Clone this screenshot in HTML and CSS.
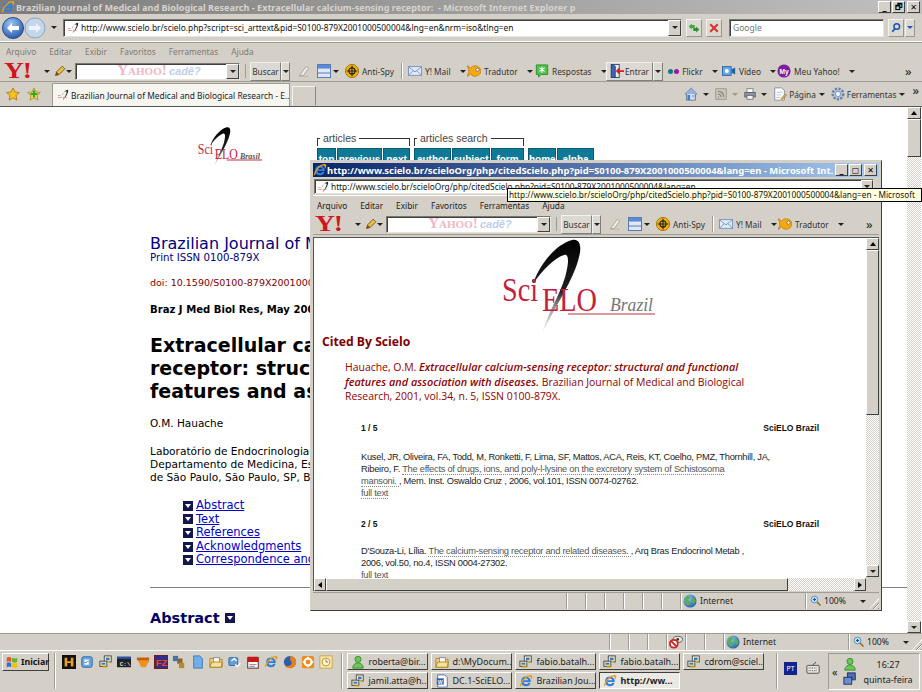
FILE: index.html
```html
<!DOCTYPE html>
<html lang="pt">
<head>
<meta charset="utf-8">
<title>Brazilian Journal of Medical and Biological Research</title>
<link rel="stylesheet" href="styles.css">
</head>
<body>
<svg class="sprite" width="0" height="0">
  <defs>
    <linearGradient id="sw" x1="0" y1="0" x2="0" y2="1"><stop offset="0" stop-color="#000"/><stop offset=".55" stop-color="#222"/><stop offset="1" stop-color="#ccc" stop-opacity=".2"/></linearGradient>
    <radialGradient id="gl" cx=".35" cy=".3" r=".8"><stop offset="0" stop-color="#8fc5ea"/><stop offset="1" stop-color="#1a5fa8"/></radialGradient>
    <radialGradient id="bk" cx=".4" cy=".3" r=".8"><stop offset="0" stop-color="#9cc6f0"/><stop offset="1" stop-color="#1c4fa8"/></radialGradient>
    <symbol id="fav" viewBox="0 0 16 16"><path d="M7 8C9 4 12 1 14 1c1.500 0 1 3-.5 6-1.500 3-4 6-6 8 1.500-3 4-6 5-9 .5-2 .5-3-.5-3-2 0-4 3-5.500 5z" fill="#222"/><path d="M1 8h4v1H1zM1 11h6v1H1zM8 11h5v1H8z" fill="#e08a8a"/></symbol>
    <symbol id="ie" viewBox="0 0 16 16"><path d="M8 3a5.500 5.500 0 1 0 5.200 7h-2.500a3 3 0 0 1-5.600-1H13.500A5.500 5.500 0 0 0 8 3zM5.200 7a3 3 0 0 1 5.600 0z" fill="#2f7fd6"/><path d="M1 13C3 6 10 0 14.500 1.500 16 2.500 15 5 13.500 7 14 4 13 2.600 11 3 7 4 3.500 9 2.500 13.500 2 14.500 1 14 1 13z" fill="#e8a020"/></symbol>
    <symbol id="globe" viewBox="0 0 16 16"><circle cx="8" cy="8" r="7.500" fill="url(#gl)"/><path d="M4 3c2-1 4 0 4 1S6 6 6 7s2 1 2 3-2 3-3 3-1-3-2-4-1-2-1-3 1-2 2-3zM10 5c2-1 4 1 4 3s-1 3-2 3-1-2-2-3 0-2 0-3z" fill="#5bb04b"/></symbol>
    <symbol id="zoomi" viewBox="0 0 16 16"><circle cx="6" cy="6" r="4.500" fill="#bfe0fa" stroke="#3d7fc0"/><path d="M4 6h4M6 4v4" stroke="#1d4fa0" stroke-width="1.500"/><path d="M9.500 9.500 14 14" stroke="#a07020" stroke-width="2.200"/></symbol>
    <symbol id="pencil" viewBox="0 0 16 16"><path d="M2 14l1.500-5L11 1.500l3.500 3.500L7 12.500z" fill="#e8c040" stroke="#5c3c10"/><path d="M2 14l1.500-5 3.500 3.500z" fill="#7a4a20"/></symbol>
    <symbol id="eraser" viewBox="0 0 16 16"><path d="M2 14L10 3c1-1 2-1 3 0s1 2 0 3L7 14z" fill="#eeeae0" stroke="#9a968c"/><path d="M1 15h13" stroke="#b0aca0"/></symbol>
    <symbol id="layout" viewBox="0 0 16 16"><rect x=".5" y="1.500" width="13" height="13" fill="#dfe8f6" stroke="#5a7ab8"/><path d="M.5 5h13M.5 10h13" stroke="#5a7ab8"/><rect x="1" y="2" width="12" height="3" fill="#5a8ad8"/></symbol>
    <symbol id="spy" viewBox="0 0 16 16"><circle cx="8" cy="8" r="7.500" fill="#f4b400" stroke="#a06a00"/><circle cx="8" cy="8" r="3.500" fill="none" stroke="#222" stroke-width="1.300"/><path d="M8 2v12M2 8h12" stroke="#222" stroke-width="1.300"/></symbol>
    <symbol id="mail" viewBox="0 0 16 16"><rect x=".5" y="3" width="15" height="10" fill="#dfeafa" stroke="#6f8fc8"/><path d="M1 3.500 8 9l7-5.500M1 12.500 6 7.500M15 12.500 10 7.500" fill="none" stroke="#6f8fc8"/></symbol>
    <symbol id="fish" viewBox="0 0 16 16"><path d="M0 2c2 0 3 2 4 3 1-2 3-3 5-3 4 0 7 3 7 6s-3 6-7 6c-2 0-4-1-5-3-1 1-2 3-4 3 1-2 2-4 2-6S1 4 0 2z" fill="#f5a80e" stroke="#a86404" stroke-width=".6"/><circle cx="12" cy="6.500" r="1.800" fill="#fff" stroke="#333" stroke-width=".6"/></symbol>
    <symbol id="resp" viewBox="0 0 16 16"><path d="M1.500 1h13v11H7l-3 3v-3H1.500z" fill="#4fc24b" stroke="#2a8a2a"/><path d="M8 3v7M5 4.500l6 4M11 4.500l-6 4" stroke="#fff" stroke-width="1.200"/></symbol>
    <symbol id="door" viewBox="0 0 16 16"><rect x="1.500" y=".5" width="9" height="15" fill="#eaf0fa" stroke="#24407a"/><path d="M1.500.5 6 2.500v13H1.500z" fill="#3c64b0" stroke="#24407a"/><path d="M16 8H9M11 5 8 8l3 3" fill="none" stroke="#d02020" stroke-width="2"/></symbol>
    <symbol id="video" viewBox="0 0 16 16"><rect x=".5" y="3" width="10" height="10" fill="#6aa8e8" stroke="#2060a8"/><circle cx="5.500" cy="8" r="2.200" fill="#fff"/><path d="M11 6l4-2v8l-4-2z" fill="#2060a8"/></symbol>
    <symbol id="my" viewBox="0 0 16 16"><circle cx="8" cy="8" r="7.500" fill="#7b1fa2"/><text x="8" y="11" text-anchor="middle" font-family="Liberation Sans" font-size="7.500" font-weight="700" fill="#fff">My</text></symbol>
    <symbol id="home" viewBox="0 0 16 16"><path d="M8 1 1 8h2v7h10V8h2z" fill="#dfe6f0" stroke="#586a8a"/><rect x="4" y="9" width="3" height="6" fill="#3f7fd0"/><rect x="9" y="9" width="3" height="3" fill="#8fb8e8"/><path d="M8 1 1 8h14z" fill="#9ab0d8"/></symbol>
    <symbol id="feed" viewBox="0 0 16 16"><rect x="1" y="1" width="14" height="14" fill="#c8c4ba" stroke="#908c84"/><path d="M4 12h1.500M4 8c2.500 0 4 1.500 4 4M4 4.500c4.500 0 7.500 3 7.500 7.500" fill="none" stroke="#8a867e" stroke-width="1.500"/></symbol>
    <symbol id="print" viewBox="0 0 16 16"><rect x="4" y="1" width="8" height="5" fill="#fff" stroke="#6a6a6a"/><rect x="1" y="6" width="14" height="6" fill="#8a96a8" stroke="#555"/><rect x="4" y="10" width="8" height="5" fill="#f2f2f2" stroke="#666"/></symbol>
    <symbol id="page" viewBox="0 0 16 16"><path d="M2 1h8l3 3v11H2z" fill="#fff" stroke="#7a8aa8"/><path d="M4 6h7M4 9h5M4 12h4" stroke="#b0bccc"/><path d="M9 13l5-5 1.500 1.500-5 5z" fill="#e8b040" stroke="#8a6010" stroke-width=".6"/></symbol>
    <symbol id="gear" viewBox="0 0 16 16"><circle cx="8" cy="8" r="6" fill="#b7cbe0" stroke="#6a84a8" stroke-width="3" stroke-dasharray="2.500 1.500"/><circle cx="8" cy="8" r="3" fill="#eef4fb" stroke="#7a90ae"/></symbol>
    <symbol id="star" viewBox="0 0 16 16"><path d="M8 1l2.200 4.700 5.100.6-3.800 3.500 1 5.200L8 12.400 3.500 15l1-5.200L.7 6.300l5.100-.6z" fill="#f7c21e" stroke="#b07a10"/></symbol>
    <symbol id="star2" viewBox="0 0 16 16"><path d="M8 1l2.200 4.700 5.100.6-3.800 3.500 1 5.200L8 12.400 3.500 15l1-5.200L.7 6.300l5.100-.6z" fill="#f7d860" stroke="#b09020"/><path d="M8 4v8M4 8h8" stroke="#2fa82f" stroke-width="2.500"/></symbol>
    <symbol id="block" viewBox="0 0 16 16"><ellipse cx="10" cy="5" rx="5.500" ry="3.500" fill="#e8e4d8" stroke="#555"/><circle cx="10" cy="5" r="1.500" fill="#333"/><circle cx="5.500" cy="10" r="4.500" fill="#fff" stroke="#d02020" stroke-width="2"/><path d="M2.500 7 8.500 13" stroke="#d02020" stroke-width="2"/></symbol>
    <symbol id="winflag" viewBox="0 0 16 16"><path d="M2 3c2-1 3-1 5 0v5C5 7 4 7 2 8z" fill="#e2542a"/><path d="M8 3c2 1 4 1 6 0v5c-2 1-4 1-6 0z" fill="#6cb52d"/><path d="M2 9c2-1 3-1 5 0v5c-2-1-3-1-5 0z" fill="#2f70d0"/><path d="M8 9c2 1 4 1 6 0v5c-2 1-4 1-6 0z" fill="#f2c010"/></symbol>
    <symbol id="hicon" viewBox="0 0 16 16"><rect width="16" height="16" fill="#111"/><path d="M3 3h3v4h4V3h3v10h-3V9H6v4H3z" fill="#e8a020"/></symbol>
    <symbol id="shield" viewBox="0 0 16 16"><rect x="2" y="2" width="12" height="12" rx="2" fill="#6aa4dc" stroke="#2a62a8"/><path d="M5 5h5v2H7v1h3v3H5V9h3V8H5z" fill="#fff"/></symbol>
    <symbol id="pcs" viewBox="0 0 16 16"><rect x="6" y="1" width="8" height="7" fill="#f0e8c0" stroke="#444"/><rect x="1" y="7" width="8" height="6" fill="#e0d8b0" stroke="#444"/><rect x="8" y="3" width="4" height="3" fill="#3878c8"/><rect x="3" y="9" width="4" height="2" fill="#3878c8"/><path d="M4 14h5M9 9l3-1" stroke="#e8c020" stroke-width="1.500"/></symbol>
    <symbol id="cmd" viewBox="0 0 16 16"><rect y="2" width="16" height="12" fill="#222"/><rect y="2" width="16" height="2.500" fill="#2a4fa8"/><text x="3" y="12" font-family="Liberation Mono" font-size="7" font-weight="700" fill="#ddd">C:\</text></symbol>
    <symbol id="box" viewBox="0 0 16 16"><path d="M1 3h14v4l-4 7H6L3 8z" fill="#f09020"/><path d="M1 3h14v3H1z" fill="#c06010"/></symbol>
    <symbol id="fz" viewBox="0 0 16 16"><rect width="16" height="16" fill="#7a1818"/><rect x="1" y="1" width="14" height="14" fill="#3a2a88"/><text x="2" y="12" font-family="Liberation Sans" font-size="11" font-weight="700" fill="#e84a20">FZ</text></symbol>
    <symbol id="cubes" viewBox="0 0 16 16"><rect x="1" y="1" width="6" height="6" fill="#4a70a8"/><rect x="6" y="4" width="6" height="6" fill="#886a30"/><rect x="8" y="9" width="6" height="6" fill="#b88a30"/></symbol>
    <symbol id="doc" viewBox="0 0 16 16"><path d="M3 1h7l3 3v11H3z" fill="#72aee6" stroke="#3a7ab8"/></symbol>
    <symbol id="folder" viewBox="0 0 16 16"><path d="M1 4h5l1 1h8v9H1z" fill="#f4d480" stroke="#a88428"/><rect x="5" y="3" width="7" height="7" fill="#f8f8f8" stroke="#888"/><path d="M1 14l2-6h12l-1 6z" fill="#f8e098" stroke="#a88428"/></symbol>
    <symbol id="net" viewBox="0 0 16 16"><rect x="1" y="3" width="10" height="9" rx="1" fill="#5fa0dc" stroke="#2a60a8"/><path d="M4 7l3-3 3 3M8 11l3 2 3-4" fill="none" stroke="#fff" stroke-width="1.500"/></symbol>
    <symbol id="note" viewBox="0 0 16 16"><rect x="2" y="3" width="12" height="12" fill="#fff" stroke="#501010"/><rect x="2" y="2" width="12" height="6" fill="#c81818"/><path d="M4 11h8M4 13h6" stroke="#777"/></symbol>
    <symbol id="fox" viewBox="0 0 16 16"><circle cx="8" cy="8" r="7" fill="#2a5fb0"/><path d="M8 1c4 0 7 3 7 7s-3 7-7 7c-3 0-5-1-6-3 2 1 5 1 7-1s1-4-1-5c0-2 1-3 0-5z" fill="#e8801a"/></symbol>
    <symbol id="ogear" viewBox="0 0 16 16"><rect x="1" y="1" width="14" height="14" rx="2" fill="#f08a18"/><circle cx="8" cy="8" r="4" fill="none" stroke="#fff" stroke-width="2.500"/><path d="M8 2v3M8 11v3M2 8h3M11 8h3" stroke="#fff" stroke-width="2"/></symbol>
    <symbol id="clock" viewBox="0 0 16 16"><rect x="1" y="1" width="14" height="14" fill="#fbe9a8" stroke="#c8a040"/><circle cx="8" cy="8" r="4.500" fill="#fff8dc" stroke="#b08838"/><path d="M8 5v3h2.500" fill="none" stroke="#906820"/></symbol>
    <symbol id="buddy" viewBox="0 0 16 16"><circle cx="8" cy="5" r="3.500" fill="#6cc65a" stroke="#3a8a30"/><path d="M2 15c0-4 3-6 6-6s6 2 6 6z" fill="#6cc65a" stroke="#3a8a30"/></symbol>
    <symbol id="wordi" viewBox="0 0 16 16"><path d="M3 1h8l3 3v11H3z" fill="#fff" stroke="#4a6ab0"/><rect x="2" y="5" width="8" height="7" fill="#2a5ab0"/><text x="3" y="11" font-family="Liberation Sans" font-size="6" font-weight="700" fill="#fff">W</text></symbol>
    <symbol id="kbd" viewBox="0 0 16 16"><rect x="1" y="5" width="14" height="9" rx="1" fill="#e8e6de" stroke="#444"/><path d="M3 8h10M3 11h10" stroke="#444" stroke-dasharray="1 1"/><path d="M8 5c0-3 3-1 3-4" fill="none" stroke="#444"/></symbol>
    <symbol id="mon" viewBox="0 0 16 16"><rect x="5" y="1" width="9" height="8" fill="#4a6eb0" stroke="#1c2f5c"/><rect x="1" y="6" width="9" height="8" fill="#6a8ecc" stroke="#1c2f5c"/></symbol>
    <symbol id="search" viewBox="0 0 16 16"><circle cx="9" cy="6" r="3.800" fill="none" stroke="#1d52b8" stroke-width="2"/><path d="M6.500 9 3 13" stroke="#1d52b8" stroke-width="2.500"/></symbol>
    <symbol id="go" viewBox="0 0 16 16"><path d="M1 6 5 2v2h4v4H5v2z" fill="#41a83f"/><path d="M15 10l-4 4v-2H7V8h4V6z" fill="#2f8f2f"/></symbol>
    <symbol id="stop" viewBox="0 0 16 16"><path d="M3 3l10 10M13 3 3 13" stroke="#d8302a" stroke-width="2.600"/></symbol>
    <symbol id="bkarrow" viewBox="0 0 22 22"><circle cx="11" cy="11" r="10.500" fill="url(#bk)" stroke="#26498c"/><path d="M5 11l5-5v3h7v4h-7v3z" fill="#fff"/></symbol>
    <symbol id="fwarrow" viewBox="0 0 22 22"><circle cx="11" cy="11" r="10" fill="#c4d6ea" stroke="#8ba4c4"/><path d="M17 11l-5-5v3H5v4h7v3z" fill="#eef4fb"/></symbol>
  </defs>
</svg>

<div class="desktop">
  <main class="window main-win">
    <div class="titlebar inactive">
      <svg class="ic14"><use href="#ie"/></svg>
      <span class="title-text">Brazilian Journal of Medical and Biological Research - Extracellular calcium-sensing receptor:  - Microsoft Internet Explorer p</span>
      <span class="winbtns"><span class="wb">_</span><span class="wb">🗗</span><span class="wb wb-x">✕</span></span>
    </div>
    <div class="addr-row">
      <svg class="nav-ic"><use href="#bkarrow"/></svg>
      <svg class="nav-ic"><use href="#fwarrow"/></svg>
      <i class="dn nav-dn"></i>
      <div class="field addr-field">
        <svg class="ic12"><use href="#fav"/></svg>
        <span class="url">http://www.scielo.br/scielo.php?script=sci_arttext&amp;pid=S0100-879X2001000500004&amp;lng=en&amp;nrm=iso&amp;tlng=en</span>
        <span class="combo-btn"><i class="dn"></i></span>
      </div>
      <span class="sq-btn"><svg class="ic12"><use href="#go"/></svg></span>
      <span class="sq-btn"><svg class="ic12"><use href="#stop"/></svg></span>
      <div class="field google-field"><span class="google">Google</span></div>
      <span class="sq-btn sbtn"><svg class="ic12"><use href="#search"/></svg></span>
      <span class="sq-btn sdrop"><i class="dn dn-blue"></i></span>
    </div>
    <nav class="menubar main-menu">
      <span>Arquivo</span><span>Editar</span><span>Exibir</span><span>Favoritos</span><span>Ferramentas</span><span>Ajuda</span>
    </nav>
    <div class="ytb ytb-main">
      <span class="ylogo">Y!</span><span class="cell"><i class="dn"></i></span>
      <span class="cell cell-l"><svg class="ic12"><use href="#pencil"/></svg><i class="dn"></i></span>
      <div class="field yfield"><span class="yahoo-wm"><b>Yahoo!</b> <em>cadê?</em></span><span class="combo-btn"><i class="dn"></i></span></div>
      <span class="cell"><i class="grip"></i></span>
      <span class="rbtn">Buscar</span><span class="rbtn rdrop"><i class="dn"></i></span>
      <span class="cell"><svg class="ic12"><use href="#eraser"/></svg></span>
      <span class="cell cell-l"><svg class="ic16"><use href="#layout"/></svg><i class="dn"></i></span>
      <span class="cell cell-l tool"><svg class="ic14"><use href="#spy"/></svg>Anti-Spy</span>
      <span class="cell cell-l"><i class="vsep"></i></span>
      <span class="cell cell-l tool"><svg class="ic14"><use href="#mail"/></svg>Y! Mail<i class="dn dn-tool"></i></span>
      <span class="cell cell-l tool"><svg class="ic14"><use href="#fish"/></svg>Tradutor<i class="dn dn-tool"></i></span>
      <span class="cell cell-l tool"><svg class="ic14"><use href="#resp"/></svg>Respostas<i class="dn dn-tool"></i></span>
      <span class="rbtn tool"><svg class="ic14"><use href="#door"/></svg>Entrar</span><span class="rbtn rdrop rdrop-w"><i class="dn"></i></span>
      <span class="cell cell-l tool"><i class="flickr blue"></i><i class="flickr pink"></i>&nbsp;Flickr<i class="dn dn-tool"></i></span>
      <span class="cell cell-l tool"><svg class="ic14"><use href="#video"/></svg>Vídeo<i class="dn dn-tool"></i></span>
      <span class="cell cell-l tool"><svg class="ic14"><use href="#my"/></svg>Meu Yahoo!<i class="dn dn-tool"></i></span>
      <span class="chev">»</span>
    </div>
    <div class="tabs-row">
      <svg class="ic14 star"><use href="#star"/></svg>
      <svg class="ic14 star"><use href="#star2"/></svg>
      <div class="tab"><svg class="ic12"><use href="#fav"/></svg><span>Brazilian Journal of Medical and Biological Research - E...</span></div>
      <div class="tab-new"></div>
      <div class="cmds">
        <svg class="ic14"><use href="#home"/></svg><i class="dn"></i>
        <svg class="ic12"><use href="#feed"/></svg><i class="dn dn-off"></i>
        <svg class="ic12"><use href="#print"/></svg><i class="dn"></i>
        <svg class="ic14"><use href="#page"/></svg><span>Página</span><i class="dn"></i>
        <svg class="ic14"><use href="#gear"/></svg><span>Ferramentas</span><i class="dn"></i>
        <span class="chev chev-s">»</span>
      </div>
    </div>
    <div class="viewport">
      <article class="article">
        <header class="art-head">
          <svg class="logo-s" viewBox="0 0 153 95" aria-label="SciELO Brasil">
            <path d="M32 42C37 28 52 6 70 1C78-1 80 8 77 18C72 40 54 66 40 95C46 72 62 50 65 30C67 20 66 15 62 16C52 19 40 32 33 42Z" fill="url(#sw)"/>
            <text x="2" y="64" textLength="36" lengthAdjust="spacingAndGlyphs" class="lg-sci">Sci</text>
            <text x="42" y="75" textLength="54" lengthAdjust="spacingAndGlyphs" class="lg-elo">ELO</text>
            <text x="101" y="75" textLength="47" lengthAdjust="spacingAndGlyphs" class="lg-bra">Brasil</text>
            <path d="M70 78h83" stroke="#c03040" stroke-width="2.500"/>
          </svg>
          <div class="art-nav">
            <div class="nav-group ng-art">
              <div class="legend"><span>articles</span></div>
              <div class="nbtns"><span class="nb nb-top">top</span><span class="nb nb-prev">previous</span><span class="nb nb-next">next</span></div>
            </div>
            <div class="nav-group ng-search">
              <div class="legend"><span>articles search</span></div>
              <div class="nbtns"><span class="nb nb-auth">author</span><span class="nb nb-subj">subject</span><span class="nb nb-form">form</span></div>
            </div>
            <div class="nav-group ng-home">
              <div class="legend-none"></div>
              <div class="nbtns"><span class="nb nb-home">home</span><span class="nb nb-alpha">alpha</span></div>
            </div>
          </div>
        </header>
        <p class="journal">Brazilian Journal of Medical and Biological Research</p>
        <p class="issn">Print ISSN 0100-879X</p>
        <p class="doi">doi: 10.1590/S0100-879X2001000500004</p>
        <p class="cite">Braz J Med Biol Res, May 2001, Volume 34(5) 573-580</p>
        <h1 class="art-title">Extracellular calcium-sensing<br>receptor: structural and functional<br>features and association with diseases</h1>
        <p class="author">O.M. Hauache</p>
        <p class="affil">Laboratório de Endocrinologia Molecular e Translacional,<br>Departamento de Medicina, Escola Paulista de Medicina, Universidade Federal<br>de São Paulo, São Paulo, SP, Brasil</p>
        <ul class="toc">
          <li><i class="sq-arrow"></i><a href="#">Abstract</a></li>
          <li><i class="sq-arrow"></i><a href="#">Text</a></li>
          <li><i class="sq-arrow"></i><a href="#">References</a></li>
          <li><i class="sq-arrow"></i><a href="#">Acknowledgments</a></li>
          <li><i class="sq-arrow"></i><a href="#">Correspondence and notes</a></li>
        </ul>
        <hr class="rule">
        <h2 class="abs">Abstract <i class="sq-arrow sq-up"></i></h2>
      </article>
      <div class="vscroll main-v">
        <span class="sb-btn"><i class="up"></i></span>
        <span class="sb-thumb"></span>
        <span class="sb-track"></span>
        <span class="sb-btn"><i class="dn"></i></span>
      </div>
    </div>
    <div class="status status-main">
      <span class="st-fill"></span>
      <span class="st-cell"></span><span class="st-cell"></span><span class="st-cell"></span>
      <span class="st-cell st-ic"><svg class="ic14"><use href="#block"/></svg></span>
      <span class="st-cell"></span><span class="st-cell"></span>
      <span class="st-zone"><svg class="ic14"><use href="#globe"/></svg>Internet</span>
      <span class="st-zoom"><svg class="ic12"><use href="#zoomi"/></svg>100%<i class="dn"></i></span>
      <span class="st-grip"></span>
    </div>
  </main>

  <footer class="taskbar">
    <button class="start"><svg class="ic14"><use href="#winflag"/></svg>Iniciar</button>
    <i class="tb-sep sep-a"></i>
    <div class="quick">
      <svg class="ic14"><use href="#hicon"/></svg><svg class="ic14"><use href="#shield"/></svg><svg class="ic14"><use href="#pcs"/></svg><svg class="ic14"><use href="#cmd"/></svg><svg class="ic14"><use href="#box"/></svg><svg class="ic14"><use href="#fz"/></svg><svg class="ic14"><use href="#cubes"/></svg><svg class="ic14"><use href="#doc"/></svg><svg class="ic14"><use href="#folder"/></svg><svg class="ic14"><use href="#net"/></svg><svg class="ic14"><use href="#note"/></svg><svg class="ic14"><use href="#ie"/></svg><svg class="ic14"><use href="#fox"/></svg><svg class="ic14"><use href="#ogear"/></svg><svg class="ic14"><use href="#clock"/></svg>
    </div>
    <i class="tb-sep sep-b"></i>
    <div class="tasks">
      <span class="task"><svg class="ic14"><use href="#buddy"/></svg>roberta@bir...</span>
      <span class="task"><svg class="ic14"><use href="#folder"/></svg>d:\MyDocum...</span>
      <span class="task"><svg class="ic14"><use href="#pcs"/></svg>fabio.batalh...</span>
      <span class="task"><svg class="ic14"><use href="#pcs"/></svg>fabio.batalh...</span>
      <span class="task"><svg class="ic14"><use href="#pcs"/></svg>cdrom@sciel...</span>
      <span class="task"><svg class="ic14"><use href="#pcs"/></svg>jamil.atta@h...</span>
      <span class="task"><svg class="ic14"><use href="#wordi"/></svg>DC.1-SciELO...</span>
      <span class="task"><svg class="ic14"><use href="#ie"/></svg>Brazilian Jou...</span>
      <span class="task active"><svg class="ic14"><use href="#ie"/></svg>http://ww...</span>
    </div>
    <i class="tb-sep sep-c"></i>
    <span class="lang">PT</span>
    <svg class="ic14 kbd"><use href="#kbd"/></svg>
    <div class="tray">
      <span class="tray-ch">«</span>
      <span class="tray-ics"><svg class="ic14"><use href="#buddy"/></svg><svg class="ic14"><use href="#mon"/></svg></span>
      <span class="clock"><span>16:27</span><span>quinta-feira</span></span>
    </div>
  </footer>

  <section class="window popup">
    <div class="titlebar active">
      <svg class="ic14"><use href="#ie"/></svg>
      <span class="title-text">http://www.scielo.br/scieloOrg/php/citedScielo.php?pid=S0100-879X2001000500004&amp;lang=en - Microsoft Int...</span>
      <span class="winbtns"><span class="wb">_</span><span class="wb">▢</span><span class="wb wb-x">✕</span></span>
    </div>
    <div class="pop-addr">
      <div class="field pop-field">
        <svg class="ic12"><use href="#fav"/></svg>
        <span class="url">http://www.scielo.br/scieloOrg/php/citedScielo.php?pid=S0100-879X2001000500004&amp;lang=en</span>
        <span class="combo-btn"><i class="dn"></i></span>
      </div>
    </div>
    <nav class="menubar pop-menu">
      <span>Arquivo</span><span>Editar</span><span>Exibir</span><span>Favoritos</span><span>Ferramentas</span><span>Ajuda</span>
    </nav>
    <div class="ytb ytb-pop">
      <span class="ylogo">Y!</span><span class="cell"><i class="dn"></i></span>
      <span class="cell cell-l"><svg class="ic12"><use href="#pencil"/></svg><i class="dn"></i></span>
      <div class="field yfield"><span class="yahoo-wm"><b>Yahoo!</b> <em>cadê?</em></span><span class="combo-btn"><i class="dn"></i></span></div>
      <span class="cell"><i class="grip"></i></span>
      <span class="rbtn">Buscar</span><span class="rbtn rdrop"><i class="dn"></i></span>
      <span class="cell"><svg class="ic12"><use href="#eraser"/></svg></span>
      <span class="cell cell-l"><svg class="ic16"><use href="#layout"/></svg><i class="dn"></i></span>
      <span class="cell cell-l tool"><svg class="ic14"><use href="#spy"/></svg>Anti-Spy</span>
      <span class="cell cell-l"><i class="vsep"></i></span>
      <span class="cell cell-l tool"><svg class="ic14"><use href="#mail"/></svg>Y! Mail<i class="dn dn-tool"></i></span>
      <span class="cell cell-l tool"><svg class="ic14"><use href="#fish"/></svg>Tradutor<i class="dn dn-tool"></i></span>
      <span class="chev">»</span>
    </div>
    <div class="pop-view">
      <div class="pop-main">
        <div class="pop-content">
          <svg class="logo-l" viewBox="0 0 153 95" aria-label="SciELO Brazil">
            <path d="M32 42C37 28 52 6 70 1C78-1 80 8 77 18C72 40 54 66 40 95C46 72 62 50 65 30C67 20 66 15 62 16C52 19 40 32 33 42Z" fill="url(#sw)"/>
            <circle cx="32" cy="42" r="2" fill="#222"/>
            <text x="0" y="62" textLength="36" lengthAdjust="spacingAndGlyphs" class="lg-sci">Sci</text>
            <text x="40" y="72" textLength="55" lengthAdjust="spacingAndGlyphs" class="lg-elo">ELO</text>
            <text x="108" y="72" textLength="43" lengthAdjust="spacingAndGlyphs" class="lg-bra2">Brazil</text>
            <path d="M66 75h87" stroke="#c03040" stroke-width="1.200"/>
          </svg>
          <h2 class="cited">Cited By Scielo</h2>
          <p class="ref">Hauache, O.M. <em>Extracellular calcium-sensing receptor: structural and functional<br>features and association with diseases.</em> Brazilian Journal of Medical and Biological<br>Research, 2001, vol.34, n. 5, ISSN 0100-879X.</p>
          <section class="entry">
            <div class="e-head"><b>1 / 5</b><b>SciELO Brazil</b></div>
            <p class="e-text">Kusel, JR, Oliveira, FA, Todd, M, Ronketti, F, Lima, SF, Mattos, ACA, Reis, KT, Coelho, PMZ, Thornhill, JA,<br>Ribeiro, F. <a href="#">The effects of drugs, ions, and poly-l-lysine on the excretory system of Schistosoma<br>mansoni. </a>, Mem. Inst. Oswaldo Cruz , 2006, vol.101, ISSN 0074-02762.<br><a href="#">full text</a></p>
          </section>
          <section class="entry">
            <div class="e-head"><b>2 / 5</b><b>SciELO Brazil</b></div>
            <p class="e-text e-text-b">D'Souza-Li, Lília. <a href="#">The calcium-sensing receptor and related diseases. </a>, Arq Bras Endocrinol Metab ,<br>2006, vol.50, no.4, ISSN 0004-27302.<br><a href="#">full text</a></p>
          </section>
        </div>
        <div class="hscroll">
          <span class="sb-btn"><i class="lf"></i></span>
          <span class="sb-thumb"></span>
          <span class="sb-track"></span>
          <span class="sb-btn"><i class="rt"></i></span>
        </div>
      </div>
      <div class="vscroll pop-v">
        <span class="sb-btn"><i class="up"></i></span>
        <span class="sb-thumb"></span>
        <span class="sb-track"></span>
        <span class="sb-btn"><i class="dn"></i></span>
      </div>
    </div>
    <div class="status status-pop">
      <span class="st-fill"></span>
      <span class="st-cell"></span><span class="st-cell"></span><span class="st-cell"></span><span class="st-cell"></span><span class="st-cell"></span><span class="st-cell"></span>
      <span class="st-zone"><svg class="ic14"><use href="#globe"/></svg>Internet</span>
      <span class="st-zoom"><svg class="ic12"><use href="#zoomi"/></svg>100%<i class="dn"></i></span>
      <span class="st-grip"></span>
    </div>
  </section>

  <div class="tooltip">http://www.scielo.br/scieloOrg/php/citedScielo.php?pid=S0100-879X2001000500004&amp;lang=en - Microsoft</div>
</div>
</body>
</html>
```

FILE: styles.css
```css
* { box-sizing: border-box; }
html, body { margin: 0; padding: 0; }
body { width: 922px; height: 692px; overflow: hidden; background: #d4d0c8; font-family: "Noto Sans", "DejaVu Sans", sans-serif; font-size: 8.3px; color: #222; }
.sprite { position: absolute; }
svg { display: block; flex: none; }
.ic12 { width: 12px; height: 12px; }
.ic14 { width: 14px; height: 14px; }
.ic16 { width: 16px; height: 16px; }

.desktop { position: relative; width: 922px; height: 692px; display: flex; flex-direction: column; }
.window { display: flex; flex-direction: column; background: #d4d0c8; }
.main-win { height: 650px; flex: none; }

/* title bars */
.titlebar { height: 14px; display: flex; align-items: center; font-weight: 700; font-size: 9.1px; color: #d8d4cc; overflow: hidden; white-space: pre; flex: none; }
.titlebar .ic14 { margin-left: 1px; margin-right: 1px; }
.titlebar.inactive { background: linear-gradient(90deg, #7c7c7c, #c0c0c0); }
.titlebar.active { background: linear-gradient(90deg, #0a246a, #a6caf0); color: #fff; font-size: 9.45px; }
.titlebar.active .ic14 { margin: 0; }
.title-text { flex: 1; overflow: hidden; }
.winbtns { display: flex; gap: 0; margin-right: 2px; }
.wb { width: 13px; height: 12px; margin-left: 1px; background: #d4d0c8; color: #000; font-size: 8px; font-weight: 700; line-height: 11px; text-align: center; border: 1px solid; border-color: #fff #404040 #404040 #fff; font-family: "DejaVu Sans", sans-serif; }
.wb-x { margin-left: 2px; }

/* address */
.addr-row { height: 28px; display: flex; align-items: center; padding-left: 2px; flex: none; border-bottom: 1px solid #fff; box-shadow: 0 1px 0 #a09c94; }
.nav-ic { width: 22px; height: 22px; }
.nav-dn { margin: 0 6px 0 5px; }
.field { display: flex; align-items: center; background: #fff; border: 1px solid; border-color: #7a776f #e6e3dc #e6e3dc #7a776f; box-shadow: inset 1px 1px 0 #404040; }
.addr-field { width: 619px; height: 18px; padding-left: 3px; }
.url { flex: 1; margin-left: 2px; font-size: 8.4px; color: #111; white-space: nowrap; overflow: hidden; }
.combo-btn { width: 13px; height: 100%; background: #d4d0c8; display: flex; align-items: center; justify-content: center; border: 1px solid; border-color: #fff #404040 #404040 #fff; }
.sq-btn { width: 16px; height: 18px; margin-left: 4px; display: flex; align-items: center; justify-content: center; background: #dcd9d2; border: 1px solid; border-color: #f4f2ee #9a968c #9a968c #f4f2ee; }
.google-field { width: 155px; height: 18px; margin-left: 7px; padding-left: 3px; color: #777; font-size: 8.5px; }
.sbtn { margin-left: 4px; }
.sdrop { width: 10px; margin-left: 1px; }

/* drop arrow */
.dn, .up, .lf, .rt { display: inline-block; width: 0; height: 0; border-style: solid; flex: none; }
.dn { border-width: 3px 3px 0; border-color: #222 transparent transparent; }
.dn-blue { border-top-color: #1d52b8; }
.dn-off { border-top-color: #a09c94; }
.dn-tool { margin-left: 6px; }
.up { border-width: 0 3px 4px; border-color: transparent transparent #000; }
.lf { border-width: 3px 4px 3px 0; border-color: transparent #000 transparent transparent; }
.rt { border-width: 3px 0 3px 4px; border-color: transparent transparent transparent #000; }

/* menus */
.menubar { display: flex; align-items: center; height: 19px; color: #7e7a72; flex: none; }
.main-menu { padding-left: 6px; gap: 13px; }
.pop-menu { padding-left: 4px; gap: 13px; color: #222; height: 18px; }

/* yahoo toolbar */
.ytb { height: 21px; display: grid; align-items: center; color: #333; flex: none; white-space: nowrap; border-bottom: 1px solid #a09c94; }
.ytb-main { padding-left: 4px; grid-template-columns: 36px 14px 21px 165px 10px 31px 9px 27px 28px 56px 7px 59px 68px 71px 47px 15px 54px 55px 128px 17px; }
.ytb-pop { padding-left: 2px; grid-template-columns: 36px 14px 21px 165px 10px 31px 9px 27px 28px 56px 7px 59px 88px 17px; }
.ylogo { font: 700 23px/20px "Liberation Serif", serif; color: #d2141e; letter-spacing: -1px; transform: scaleX(1.2); transform-origin: left center; }
.cell { display: flex; align-items: center; justify-content: center; height: 100%; }
.cell-l { justify-content: flex-start; }
.tool { gap: 3px; }
.yfield { height: 17px; justify-content: flex-end; position: relative; }
.yahoo-wm { flex: 1; text-align: center; padding-left: 16px; white-space: nowrap; line-height: 14px; }
.yahoo-wm b { font: 700 15px/14px "Liberation Serif", serif; color: #f2b6c6; font-variant: small-caps; }
.yahoo-wm em { color: #bcd0ea; font: italic 700 11px/14px "Liberation Sans", sans-serif; }
.grip { width: 1px; height: 14px; background: #a09c94; box-shadow: -2px 7px 0 -0.5px #a09c94; }
.vsep { width: 1px; height: 16px; background: #a09c94; box-shadow: 1px 0 0 #fff; }
.rbtn { height: 19px; display: flex; align-items: center; justify-content: center; background: #dcd9d2; border: 1px solid; border-color: #f4f2ee #80807a #80807a #f4f2ee; gap: 1px; }
.rdrop-w { width: 10px; }
.flickr { width: 5px; height: 5px; border-radius: 50%; flex: none; }
.tool .flickr { margin-right: -2px; }
.blue { background: #0a7d8c; }
.pink { background: #a0169a; }
.chev { font-size: 13px; line-height: 10px; color: #222; font-weight: 400; }

/* tabs */
.tabs-row { height: 25px; display: flex; align-items: flex-end; flex: none; padding-left: 3px; border-bottom: 1px solid #555; }
.star { margin: 0 4px 5px 3px; }
.star + .star { margin-right: 11px; }
.tab { width: 238px; height: 23px; display: flex; align-items: center; gap: 2px; padding-left: 4px; background: #f6f5f0; color: #222; font-size: 8.4px; white-space: nowrap; overflow: hidden; border: 1px solid #a09c94; border-bottom: 0; }
.tab-new { width: 24px; height: 20px; margin-left: 2px; background: #d4d0c8; border: 1px solid; border-color: #f4f2ee #8a867e transparent #f4f2ee; }
.cmds { flex: 1; height: 100%; display: flex; align-items: center; justify-content: flex-end; padding-right: 3px; color: #333; }
.cmds svg { margin-left: 6px; }
.cmds svg + .dn { margin-left: 5px; }
.cmds span { margin-left: 2px; }
.cmds span + .dn { margin-left: 3px; }
.cmds .chev { margin: -8px 0 0 7px; }

/* viewport */
.viewport { flex: 1; min-height: 0; display: flex; background: #fff; }
.article { flex: 1; min-width: 0; overflow: hidden; padding-left: 150px; font-family: "DejaVu Sans", sans-serif; color: #000; white-space: nowrap; }
.art-head { display: flex; height: 110px; }
.logo-s { width: 65px; height: 44px; margin: 18px 0 0 47px; }
.lg-sci { font: 400 34px "Liberation Serif", serif; fill: #c4223a; }
.lg-elo { font: 400 33px "Liberation Serif", serif; fill: #c4223a; }
.lg-bra { font: italic 700 20px "Liberation Serif", serif; fill: #555; }
.lg-bra2 { font: italic 400 18px "Liberation Serif", serif; fill: #777; }
.art-nav { display: flex; margin: 28px 0 0 55px; gap: 4px; }
.nav-group { display: flex; flex-direction: column; }
.legend { height: 8px; margin-top: 3px; border: solid #333; border-width: 1px 1px 0; font: 10.5px "Liberation Sans", sans-serif; color: #444; }
.legend span { position: relative; top: -7px; margin-left: 2px; padding: 0 3px; background: #fff; }
.legend-none { height: 8px; margin-top: 3px; }
.nbtns { display: flex; gap: 1px; margin-top: 2px; }
.nb { height: 18px; background: #0f7a97; color: #fff; font: 700 10px/22px "Liberation Sans", sans-serif; text-align: center; border: 1px solid #0a5a72; }
.nb-top { width: 19px; } .nb-prev { width: 45px; } .nb-next { width: 27px; }
.nb-auth { width: 37px; } .nb-subj { width: 38px; } .nb-form { width: 33px; }
.nb-home { width: 28px; } .nb-alpha { width: 37px; }
.journal { margin: 18px 0 0; font-size: 16px; line-height: 18px; color: #000080; }
.issn { margin: -1px 0 0; font-size: 10.2px; line-height: 12px; color: #000080; }
.doi { margin: 13px 0 0; font-size: 9.5px; line-height: 12px; color: #800000; }
.cite { margin: 15px 0 0; font-size: 10.1px; line-height: 12px; font-weight: 700; }
.art-title { margin: 18px 0 0; font-size: 19px; line-height: 23px; font-weight: 700; }
.author { margin: 14px 0 0; font-size: 10.5px; line-height: 13px; }
.affil { margin: 15px 0 0; font-size: 10.6px; line-height: 13px; }
.toc { margin: 15px 0 0; padding: 0 0 0 33px; list-style: none; font-size: 11.5px; line-height: 13.6px; }
.toc li { display: flex; align-items: center; gap: 3px; }
.toc a { color: #0000cc; }
.sq-arrow { display: inline-block; width: 10px; height: 10px; background: #16164e; flex: none; position: relative; }
.sq-arrow::after { content: ""; position: absolute; left: 2px; top: 3px; border-style: solid; border-width: 4px 3px 0; border-color: #fff transparent transparent; }
.rule { margin: 20px 0 0; border: 0; height: 1px; background: #808080; }
.abs { margin: 21px 0 0; font-size: 14.5px; line-height: 18px; color: #000066; font-weight: 700; }

/* scrollbars */
.vscroll { display: flex; flex-direction: column; flex: none; }
.main-v { width: 15px; padding-right: 1px; }
.main-v .sb-thumb { height: 38px; }
.pop-v { width: 13px; padding-bottom: 14px; background: #d4d0c8; }
.pop-v .sb-thumb { height: 165px; }
.sb-btn { display: flex; align-items: center; justify-content: center; width: 100%; height: 12px; flex: none; background: #d4d0c8; border: 1px solid; border-color: #fff #404040 #404040 #fff; }
.hscroll .sb-btn { width: 12px; height: 100%; }
.sb-thumb { display: block; background: #d4d0c8; border: 1px solid; border-color: #fff #404040 #404040 #fff; flex: none; }
.sb-track { flex: 1; background-color: #fff; background-image: conic-gradient(#d4d0c8 25%, #fff 0 50%, #d4d0c8 0 75%, #fff 0); background-size: 2px 2px; }
.hscroll { height: 13px; display: flex; flex: none; }
.hscroll .sb-thumb { width: 462px; }

/* status */
.status { display: flex; height: 17px; align-items: stretch; flex: none; font-size: 8.6px; color: #222; border-top: 1px solid #a09c94; }
.st-fill { flex: 1; }
.st-cell { width: 19px; border-left: 1px solid #a09c94; box-shadow: inset 1px 0 0 #fff; display: flex; align-items: center; justify-content: center; }
.st-zone { width: 125px; display: flex; align-items: center; gap: 3px; padding-left: 2px; border-left: 1px solid #a09c94; box-shadow: inset 1px 0 0 #fff; }
.st-zoom { width: 64px; display: flex; align-items: center; gap: 2px; padding-left: 4px; border-left: 1px solid #a09c94; box-shadow: inset 1px 0 0 #fff; }
.st-zoom .dn { margin-left: 12px; }
.st-grip { width: 10px; background: repeating-linear-gradient(135deg, #d4d0c8 0 2px, #8a867e 2px 3px, #fff 3px 4px); clip-path: polygon(100% 0, 100% 100%, 0 100%); margin-top: 5px; }

/* taskbar */
.taskbar { flex: 1; display: flex; align-items: flex-start; padding: 2px 2px 0; border-top: 1px solid #fff; overflow: hidden; }
.start { width: 47px; height: 18px; padding: 0 0 0 2px; margin: 0; display: flex; align-items: center; gap: 2px; background: #d4d0c8; border: 1px solid; border-color: #fff #404040 #404040 #fff; font: 700 8.8px "Noto Sans", sans-serif; color: #111; }
.tb-sep { width: 2px; height: 36px; flex: none; background: #a09c94; border-right: 1px solid #fff; }
.sep-a { margin: 0 6px 0 5px; }
.sep-b { margin: 0 4px 0 8px; }
.sep-c { margin: 0 6px 0 9px; }
.quick { display: flex; gap: 4.4px; margin-top: 2px; }
.tasks { display: grid; grid-template-columns: repeat(5, 81px); column-gap: 3px; row-gap: 2px; width: 420px; }
.task { height: 17px; display: flex; align-items: center; gap: 3px; padding-left: 3px; background: #d4d0c8; border: 1px solid; border-color: #fff #404040 #404040 #fff; white-space: nowrap; overflow: hidden; color: #222; font-size: 9px; }
.task.active { background: #ebe9e3; border-color: #404040 #fff #fff #404040; font-weight: 700; }
.lang { width: 13px; height: 13px; margin: 9px 0 0 0; background: #14248c; color: #fff; font-size: 7px; line-height: 13px; text-align: center; }
.kbd { margin: 8px 0 0 9px; }
.tray { width: 92px; height: 37px; margin-left: 8px; display: flex; align-items: center; border: 1px solid; border-color: #a09c94 #fff #fff #a09c94; }
.tray-ch { margin-left: 3px; width: 10px; font-size: 11px; line-height: 11px; }
.tray-ics { display: flex; flex-direction: column; margin-left: 1px; gap: 1px; }
.clock { flex: 1; display: flex; flex-direction: column; align-items: center; gap: 4px; line-height: 11px; font-size: 9px; }

/* popup window (floats over the main window) */
.popup { position: absolute; left: 310px; top: 160px; width: 572px; height: 451px; padding: 2px 2px 1px; border: 1px solid; border-color: #d4d0c8 #404040 #404040 #d4d0c8; }
.popup .titlebar { margin-bottom: 1px; }
.pop-addr { height: 18px; flex: none; padding: 1px 5px 0 1px; border-bottom: 1px solid #fff; }
.pop-field { height: 15px; padding-left: 2px; }
.pop-field .url { font-size: 8.3px; }
.pop-field .combo-btn { width: 12px; }
.pop-view { flex: 1; min-height: 0; display: flex; margin-top: 2px; border: solid #555; border-width: 1px 0 0 1px; background: #fff; }
.pop-main { flex: 1; min-width: 0; display: flex; flex-direction: column; }
.pop-content { flex: 1; min-height: 0; overflow: hidden; padding: 0 0 0 8px; background: #fff; white-space: nowrap; }
.logo-l { width: 153px; height: 95px; margin: 1px 0 0 180px; }
.cited { margin: 1px 0 0; font: 700 12.2px/14px "Open Sans", sans-serif; color: #800000; }
.ref { margin: 11px 0 0 23px; font: 10.45px/14.5px "Open Sans", sans-serif; color: #900000; }
.ref em { font-weight: 600; font-size: 10.85px; }
.entry { margin: 18px 0 0 39px; width: 458px; }
.entry + .entry { margin-top: 19px; }
.e-head { display: flex; justify-content: space-between; font: 700 8.5px/12px "Liberation Sans", sans-serif; color: #111; }
.e-text { margin: 17px 0 0; font: 9.3px/12px "Liberation Sans", sans-serif; letter-spacing: -.26px; color: #222; }
.e-text-b { margin-top: 15px; }
.e-text a { color: #555; text-decoration: none; border-bottom: 1px dotted #888; }
.status-pop { margin-top: 1px; }

.tooltip { position: absolute; left: 507px; top: 188px; width: 415px; height: 14px; padding: 0 0 0 1px; background: #ffffe1; border: 1px solid #000; font-size: 8.25px; line-height: 12px; color: #111; white-space: nowrap; overflow: hidden; }
```
